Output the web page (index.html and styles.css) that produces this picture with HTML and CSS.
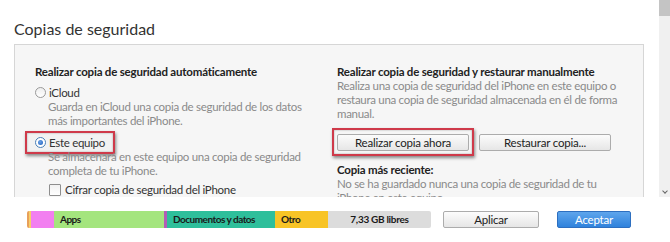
FILE: index.html
```html
<!DOCTYPE html>
<html>
<head>
  <title>Copias de seguridad</title>
  <link rel="stylesheet" href="styles.css">
</head>
<body>
  <div class="window">
    <div class="scroll-area">
      <div class="content">
        <h1>Copias de seguridad</h1>
        <div class="panel">
          <!-- Copia automática -->
          <div class="col">
            <div class="heading">Realizar copia de seguridad automáticamente</div>
            <div class="option first">
              <span class="radio"></span>
              <span class="label">iCloud</span>
            </div>
            <div class="desc">Guarda en iCloud una copia de seguridad de los datos<br>más importantes del iPhone.</div>
            <div class="option second">
              <span class="highlight">
                <span class="radio checked"></span>
                <span class="label">Este equipo</span>
              </span>
            </div>
            <div class="desc">Se almacenará en este equipo una copia de seguridad<br>completa de tu iPhone.</div>
            <div class="check-row">
              <span class="checkbox"></span>
              <span class="label">Cifrar copia de seguridad del iPhone</span>
            </div>
          </div>

          <!-- Copia manual -->
          <div class="col">
            <div class="heading">Realizar copia de seguridad y restaurar manualmente</div>
            <div class="desc flush">Realiza una copia de seguridad del iPhone en este equipo o<br>restaura una copia de seguridad almacenada en él de forma<br>manual.</div>
            <div class="buttons">
              <span class="highlight btn-wrap">
                <button class="btn wide">Realizar copia ahora</button>
              </span>
              <button class="btn wide">Restaurar copia...</button>
            </div>
            <div class="heading recent">Copia más reciente:</div>
            <div class="desc flush">No se ha guardado nunca una copia de seguridad de tu<br>iPhone en este equipo.</div>
          </div>
        </div>
      </div>
      <div class="scrollbar">
        <div class="thumb"></div>
        <div class="track"><span class="arrow"></span></div>
      </div>
    </div>

    <div class="footer">
      <div class="storage">
        <span class="seg s-orange"></span>
        <span class="seg s-yellow"></span>
        <span class="seg s-pink"></span>
        <span class="seg s-apps">Apps</span>
        <span class="seg s-purple"></span>
        <span class="seg s-docs">Documentos y datos</span>
        <span class="seg s-other">Otro</span>
        <span class="seg s-free">7,33 GB libres</span>
      </div>
      <button class="btn apply">Aplicar</button>
      <button class="btn primary">Aceptar</button>
    </div>
  </div>
</body>
</html>
```

FILE: styles.css
```css
/* Общие */
body {
  margin: 0;
  background: #fff;
  font-family: Lato, "Open Sans", sans-serif;
  font-size: 11.5px;
  letter-spacing: -0.3px;
  color: #333;
}

.window {
  width: 670px;
  height: 242px;
  overflow: hidden;
}

/* Область с прокруткой */
.scroll-area {
  display: flex;
  height: 197px;
  overflow: hidden;
}

.content {
  flex: 1;
  padding: 0 15px 0 14px;
}

h1 {
  margin: 19px 0 0 0;
  font-size: 16px;
  line-height: 20px;
  font-weight: 400;
  letter-spacing: 0;
  color: #333;
}

.panel {
  margin-top: 5px;
  height: 200px;
  background: #f6f6f6;
  border: 1px solid #d6d6d6;
  display: grid;
  grid-template-columns: 302px 1fr;
  padding: 19px 20px 0 20px;
  white-space: nowrap;
}

.heading {
  font-weight: 700;
  letter-spacing: -0.2px;
  color: #222;
  line-height: 15px;
}

.option {
  display: flex;
  align-items: center;
  height: 15px;
  line-height: 15px;
}

.option.first {
  margin-top: 6px;
}

.option.second {
  margin-top: 7px;
}

.desc {
  color: #8a8a8a;
  line-height: 14px;
  margin-left: 13px;
}

.desc.flush {
  margin-left: 0;
}

.label {
  color: #333;
}

/* Радио и чекбокс */
.radio {
  width: 9px;
  height: 9px;
  border: 1px solid #999;
  border-radius: 50%;
  background: linear-gradient(#eee, #fff);
  margin-right: 3px;
  position: relative;
}

.radio.checked {
  border-color: #4a7fb6;
  background: #fff;
}

.radio.checked::after {
  content: "";
  position: absolute;
  left: 2px;
  top: 2px;
  width: 5px;
  height: 5px;
  border-radius: 50%;
  background: radial-gradient(circle at 40% 35%, #6ba3e8, #1e5cb8);
}

.check-row {
  display: flex;
  align-items: center;
  margin: 4px 0 0 14px;
  line-height: 15px;
}

.checkbox {
  width: 10px;
  height: 10px;
  border: 1px solid #8e8e8e;
  border-radius: 1px;
  background: linear-gradient(#f2f2f2, #fff);
  margin-right: 4px;
}

/* Красная рамка-выделение */
.highlight {
  display: inline-flex;
  align-items: center;
  border: 2px solid #cf3a4a;
  box-shadow: 1px 2px 3px rgba(0, 0, 0, 0.45), inset 0 0 2px rgba(0, 0, 0, 0.35);
  background: #f2f2f2;
  margin: -4px 0 -4px -10px;
  padding: 2px 8px 2px 8px;
}

.btn-wrap {
  margin: -6px 0 -5px -5px;
  padding: 4px 3px 3px 3px;
  background: transparent;
}

/* Кнопки */
.buttons {
  display: flex;
  gap: 5px;
  margin-top: 13px;
}

.btn {
  font-family: inherit;
  font-size: 11.5px;
  letter-spacing: -0.2px;
  color: #222;
  height: 17px;
  padding: 0;
  line-height: 15px;
  border: 1px solid #acacac;
  border-radius: 2px;
  background: linear-gradient(#fcfcfc, #e6e6e6);
}

.btn.wide {
  width: 132px;
}

.heading.recent {
  margin-top: 11px;
}

/* Полоса прокрутки */
.scrollbar {
  width: 11px;
  display: flex;
  flex-direction: column;
}

.thumb {
  height: 16px;
  background: #c4c4c4;
}

.track {
  flex: 1;
  background: #f0f0f0;
  display: flex;
  align-items: flex-end;
  justify-content: center;
  padding-bottom: 4px;
}

.arrow {
  width: 3px;
  height: 3px;
  border-right: 1px solid #666;
  border-bottom: 1px solid #666;
  transform: rotate(45deg);
}

/* Нижняя панель */
.footer {
  display: flex;
  align-items: center;
  height: 45px;
  padding-left: 27px;
}

.storage {
  display: flex;
  width: 404px;
  height: 17px;
  border-radius: 2px;
  overflow: hidden;
  white-space: nowrap;
}

.seg {
  height: 100%;
  font-size: 10px;
  font-weight: 700;
  letter-spacing: -0.5px;
  color: #1a1a1a;
  line-height: 17px;
  padding-left: 6px;
  box-sizing: border-box;
}

.s-orange { width: 2px; background: #e8a05a; padding: 0; }
.s-yellow { width: 2px; background: #f7cf68; padding: 0; }
.s-pink { width: 23px; background: #f27ff0; padding: 0; }
.s-apps { width: 110px; background: #a4e57e; }
.s-purple { width: 3px; background: #b25db6; padding: 0; }
.s-docs { width: 108px; background: #2ebf9b; }
.s-other { width: 53px; background: #f8c426; }
.s-free { flex: 1; background: #dcdcdc; text-align: center; padding: 0; letter-spacing: -0.3px; }

.btn.apply {
  width: 96px;
  margin-left: 12px;
}

.btn.primary {
  width: 74px;
  margin-left: 18px;
  color: #fff;
  border-color: #2d6fc0;
  background: linear-gradient(#5ea5ec, #2f82dc);
}
```
